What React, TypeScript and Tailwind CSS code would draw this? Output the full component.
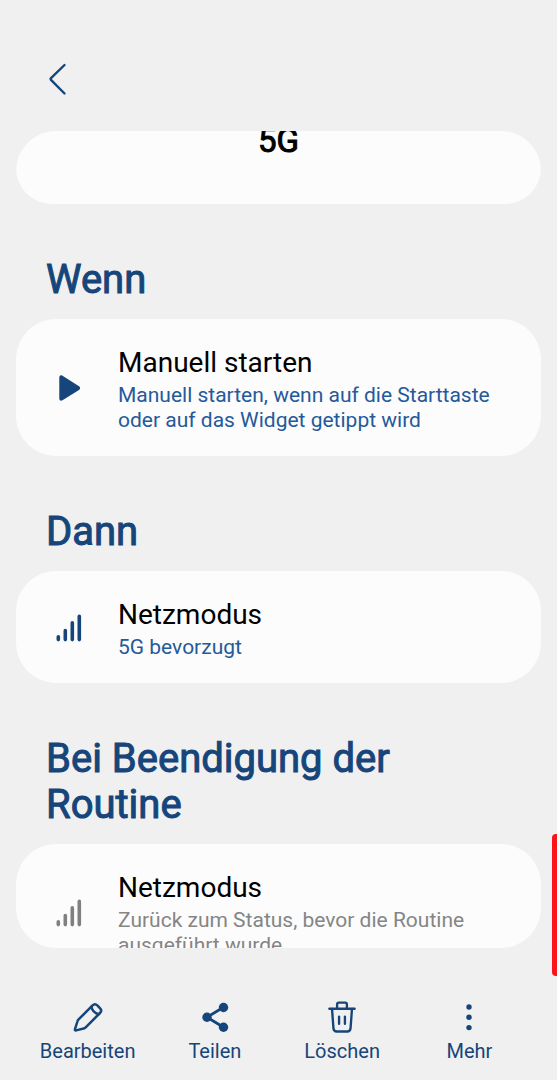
import type { ReactNode } from "react";

function BackIcon() {
  return (
    <svg viewBox="0 0 24 36" className="h-9 w-6" fill="none" stroke="currentColor" strokeWidth="2.4" strokeLinecap="round" strokeLinejoin="round">
      <path d="M20.5 4 L7 17.2 Q6.2 18 7 18.8 L20.5 32.5" />
    </svg>
  );
}

function PlayIcon() {
  return (
    <svg viewBox="0 0 32 32" className="size-8" fill="currentColor">
      <path d="M6.3 5.4 C6.3 3.5 8 2.8 9.5 3.8 L26 14.3 C27.5 15.3 27.5 17 26 18 L9.5 28.3 C8 29.2 6.3 28.5 6.3 26.7 Z" />
    </svg>
  );
}

function SignalIcon() {
  return (
    <svg viewBox="0 0 32 32" className="size-8" fill="none" stroke="currentColor" strokeWidth="3.6" strokeLinecap="round">
      <path d="M5.3 24.8 V27.6 M12.3 18.6 V27.6 M19.3 10.8 V27.6 M26.3 4.2 V27.6" />
    </svg>
  );
}

function EditIcon() {
  return (
    <svg viewBox="0 0 32 32" className="size-8" fill="none" stroke="currentColor" strokeWidth="2.5" strokeLinecap="round" strokeLinejoin="round">
      <path d="M20.6 4.4 L6.6 18.4 C6 19 5.6 19.7 5.4 20.5 L3 28.2 C2.7 29.2 3.1 29.6 4.1 29.4 L11.6 27.5 C12.4 27.3 13.1 26.9 13.7 26.3 L28 12 C29.6 10.4 29.6 8.9 28.1 7.3 L25.3 4.4 C23.7 2.8 22.2 2.8 20.6 4.4 Z" />
      <path d="M19.4 5.8 C20.2 9.6 22.6 12.2 26.6 13.2" />
    </svg>
  );
}

function ShareIcon() {
  return (
    <svg viewBox="0 0 32 32" className="size-8" fill="currentColor">
      <path d="M24.5 6.3 L8 16.2 L24.5 26.3" fill="none" stroke="currentColor" strokeWidth="2.8" />
      <circle cx="24.5" cy="6.5" r="4.7" />
      <circle cx="8" cy="16.2" r="4.7" />
      <circle cx="24.5" cy="26.2" r="4.7" />
    </svg>
  );
}

function TrashIcon() {
  return (
    <svg viewBox="0 0 32 34" className="h-8 w-8" fill="none" stroke="currentColor" strokeWidth="2.5" strokeLinecap="round" strokeLinejoin="round">
      <path d="M2.6 8.2 H29.4" />
      <path d="M10.8 8 V3.6 Q10.8 1.7 12.6 1.7 H19.4 Q21.2 1.7 21.2 3.6 V8" />
      <path d="M5.4 8.4 L6.9 28.8 C7.1 31.4 8.2 32.4 10.4 32.4 H21.6 C23.8 32.4 24.9 31.4 25.1 28.8 L26.6 8.4" />
      <path d="M12.9 16.6 V24.2 M19.1 16.6 V24.2" />
    </svg>
  );
}

function MoreIcon() {
  return (
    <svg viewBox="0 0 32 32" className="size-8" fill="currentColor">
      <circle cx="16" cy="6" r="2.7" />
      <circle cx="16" cy="16.3" r="2.7" />
      <circle cx="16" cy="26.6" r="2.7" />
    </svg>
  );
}

function Section({ title, children }: { title: string; children: ReactNode }) {
  return (
    <section className="pt-[53px]">
      <h2 className="px-[30px] text-[40px] leading-[46px] font-normal text-[#15457a] [-webkit-text-stroke:1px_#15457a]">
        {title}
      </h2>
      <div className="mt-4">{children}</div>
    </section>
  );
}

function RoutineCard({
  icon,
  title,
  detail,
  muted = false,
}: {
  icon: ReactNode;
  title: string;
  detail: string;
  muted?: boolean;
}) {
  return (
    <button
      type="button"
      className="flex w-full items-center rounded-[40px] bg-[#fcfcfc] pt-6 pr-8 pb-[23px] text-left"
    >
      <span
        className={`flex w-[102px] shrink-0 justify-center pl-1 ${muted ? "text-[#808080]" : "text-[#15457a]"}`}
      >
        {icon}
      </span>
      <span className="min-w-0 flex-1">
        <span className="block text-[28px] leading-10 text-black">{title}</span>
        <span
          className={`block text-[21px] leading-[25px] ${muted ? "text-[#858585]" : "text-[#25599a]"}`}
        >
          {detail}
        </span>
      </span>
    </button>
  );
}

const actions = [
  { label: "Bearbeiten", icon: <EditIcon /> },
  { label: "Teilen", icon: <ShareIcon /> },
  { label: "Löschen", icon: <TrashIcon /> },
  { label: "Mehr", icon: <MoreIcon /> },
];

export default function App() {
  return (
    <div className="relative flex h-screen flex-col bg-[#f0f0f0] font-[Roboto,sans-serif]">
      <header className="shrink-0 px-11 pt-[61px] pb-[34px] text-[#15457a]">
        <button type="button" aria-label="Zurück" className="block">
          <BackIcon />
        </button>
      </header>

      <main className="mx-4 min-h-0 flex-1 overflow-hidden rounded-[40px]">
        <div className="h-[73px] overflow-hidden rounded-[36px] bg-[#fcfcfc]">
          <h1 className="-mt-2.5 text-center text-[33px] leading-10 font-normal text-black [-webkit-text-stroke:1px_#000]">
            5G
          </h1>
        </div>

        <Section title="Wenn">
          <RoutineCard
            icon={<PlayIcon />}
            title="Manuell starten"
            detail="Manuell starten, wenn auf die Starttaste oder auf das Widget getippt wird"
          />
        </Section>

        <Section title="Dann">
          <RoutineCard icon={<SignalIcon />} title="Netzmodus" detail="5G bevorzugt" />
        </Section>

        <Section title="Bei Beendigung der Routine">
          <RoutineCard
            icon={<SignalIcon />}
            title="Netzmodus"
            detail="Zurück zum Status, bevor die Routine ausgeführt wurde"
            muted
          />
        </Section>
      </main>

      <nav className="grid shrink-0 grid-cols-4 px-6 pt-[53px] pb-[17px] text-[#15457a]">
        {actions.map((action) => (
          <button key={action.label} type="button" className="flex flex-col items-center gap-1.5">
            {action.icon}
            <span className="text-[20px] leading-6">{action.label}</span>
          </button>
        ))}
      </nav>

      {/* edge panel handle */}
      <div className="absolute right-0 bottom-[104px] h-[142px] w-[5px] rounded-l-sm bg-[#fb1419]" />
    </div>
  );
}
